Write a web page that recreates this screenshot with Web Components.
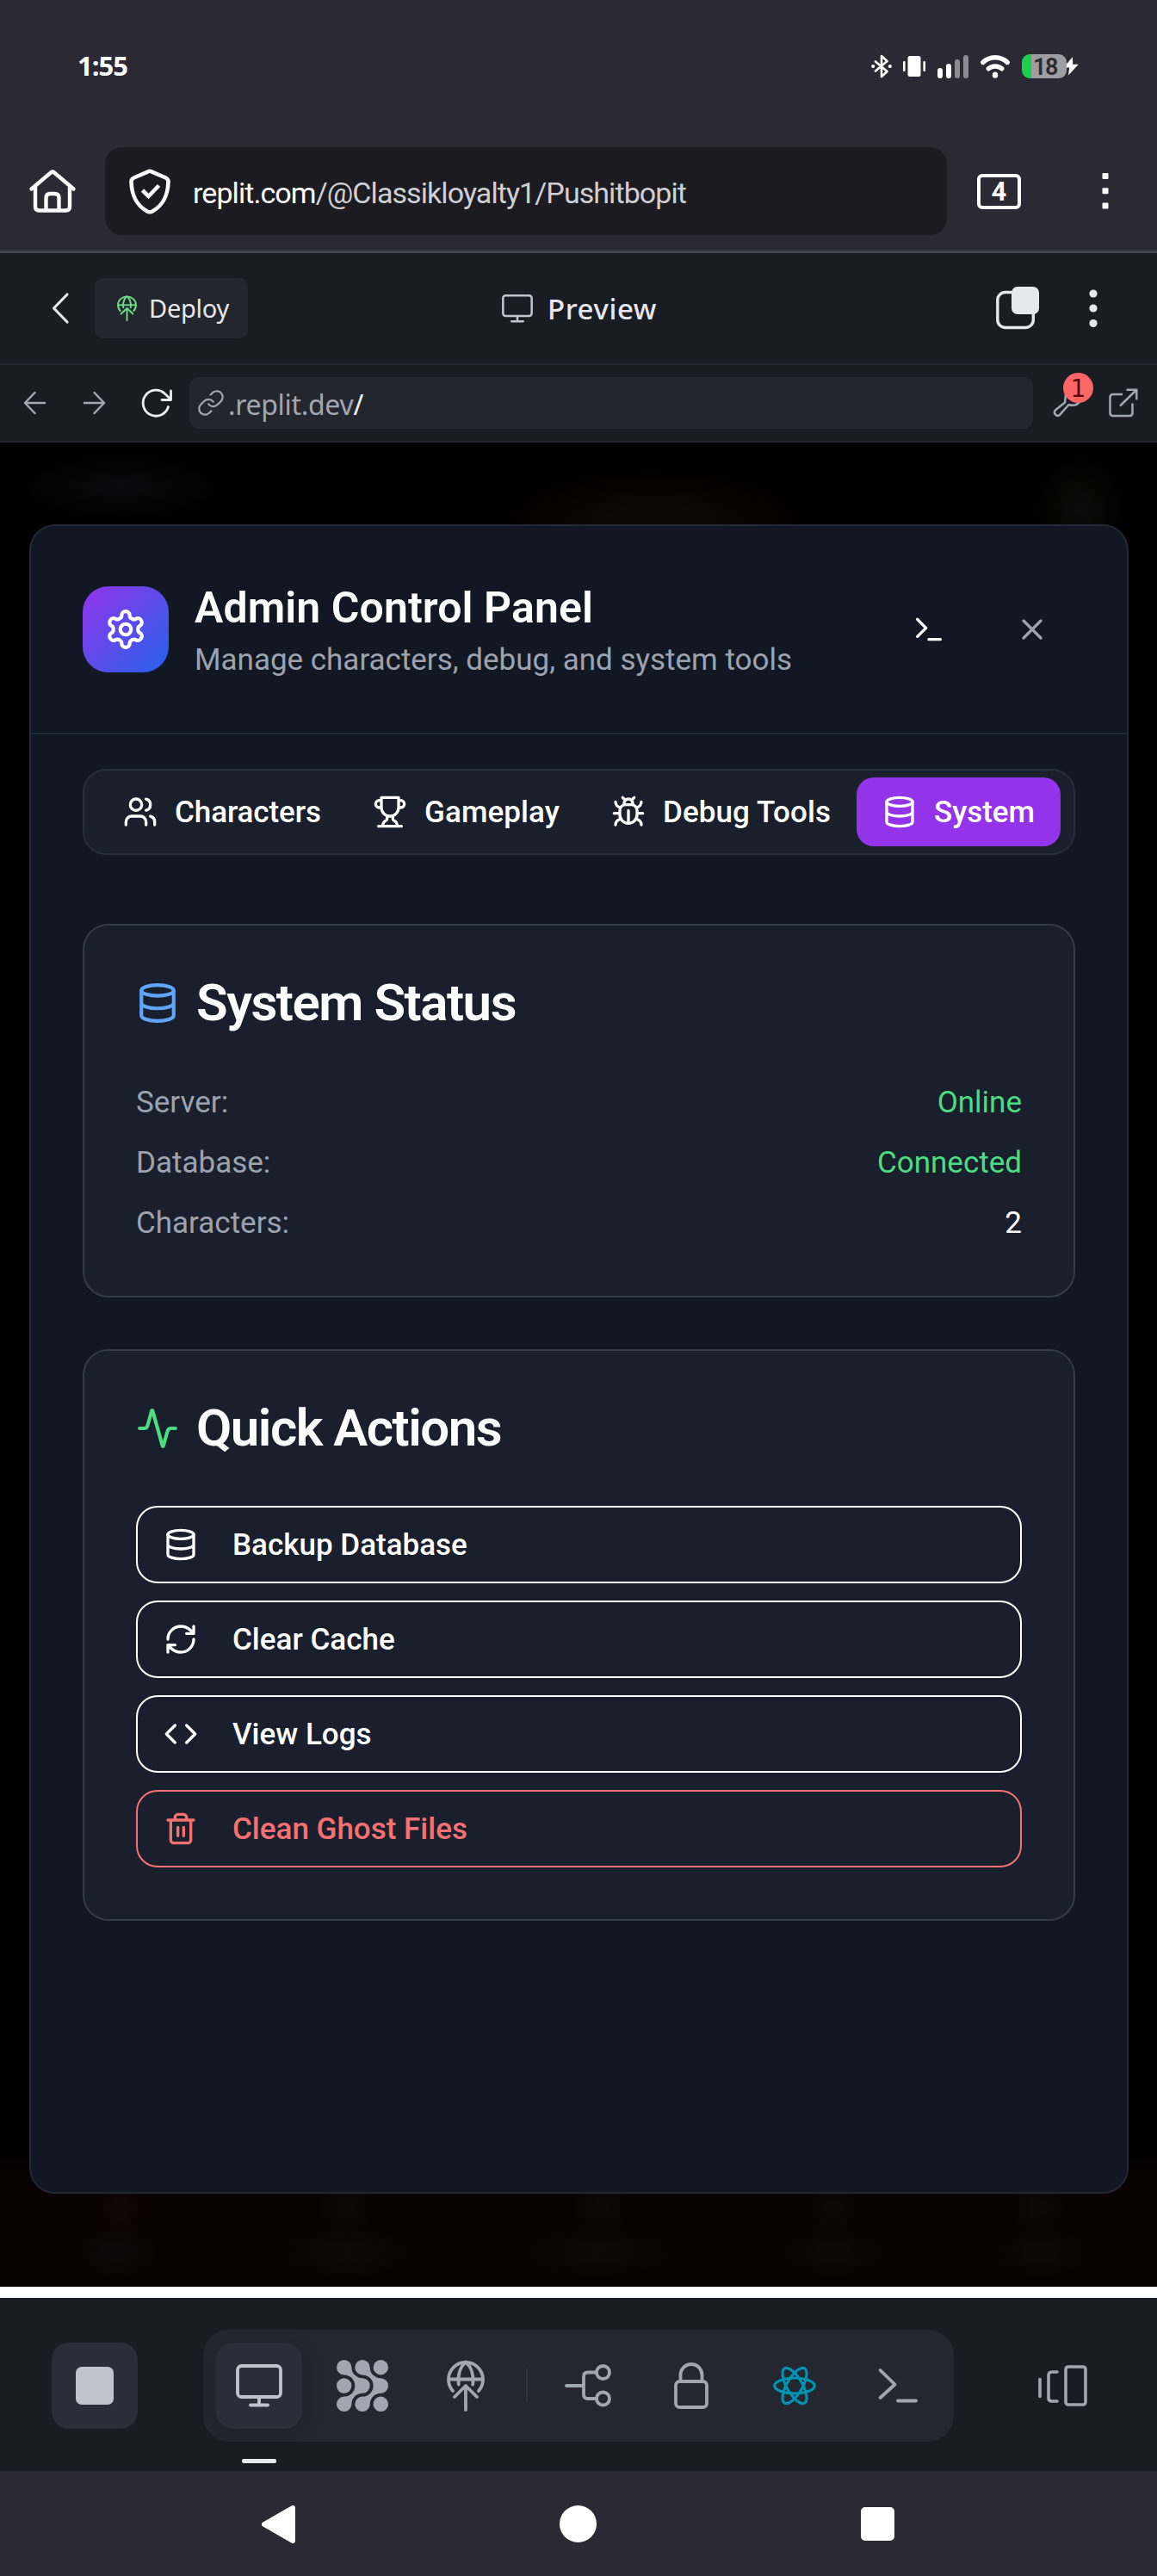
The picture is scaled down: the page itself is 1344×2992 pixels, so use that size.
<!DOCTYPE html>
<html lang="en">
<head>
<meta charset="utf-8">
<title>Replit preview</title>
<style>
html,body{margin:0;padding:0;background:#2b2933}
body{width:1344px;height:2992px;overflow:hidden;font-family:Roboto,"Noto Sans",sans-serif;color:#fff}
</style>
</head>
<body>
<phone-screen></phone-screen>
<script>
const ICONS = {
  bluetooth:[24,28,'<path d="M5 8.500 18.500 20 12 26V2l6.500 6L5 19.500" fill="none" stroke="currentColor" stroke-width="2.600" stroke-linejoin="round" stroke-linecap="round"/><circle cx="2.200" cy="14" r="2.100" fill="currentColor"/><circle cx="21.800" cy="14" r="2.100" fill="currentColor"/>'],
  vibrate:[26,24,'<g fill="currentColor"><rect x="5.500" y="0" width="15" height="24" rx="2.500"/><rect x="0" y="6" width="2.600" height="12" rx="1.200"/><rect x="23.400" y="6" width="2.600" height="12" rx="1.200"/></g>'],
  signal:[36,27,'<g fill="currentColor"><rect x="0" y="15" width="6" height="12" rx="3"/><rect x="10" y="10" width="6" height="17" rx="3"/><g opacity=".46"><rect x="20" y="5" width="6" height="22" rx="3"/><rect x="30" y="0" width="6" height="27" rx="3"/></g></g>'],
  wifi:[34,27,'<g fill="none" stroke="currentColor" stroke-width="5.400" stroke-linecap="round"><path d="M2.800 8.500C10.500.8 23.500.8 31.200 8.500"/><path d="M9.300 15.800c4.300-3.800 11.100-3.800 15.400 0"/></g><ellipse cx="17" cy="23.200" rx="3.200" ry="3.600" fill="currentColor"/>'],
  bolt:[20,24,'<path d="M12 1 1.500 13.500h6.800L7 22.500 18.800 9.800h-6.600z" fill="currentColor"/>'],
  home:[54,50,'<g fill="none" stroke="currentColor" stroke-width="4.400" stroke-linecap="round" stroke-linejoin="round"><path d="M2.500 22.500 25 3.500q2-1.700 4 0l22.500 19"/><path d="M7 19v24q0 4.500 4.500 4.500h31q4.500 0 4.500-4.500V19"/><path d="M19.500 47V33q0-5 5-5h5q5 0 5 5v14"/></g>'],
  shield:[48,53,'<path d="M22 3.300q2-1 4 0l16.500 7.200q3 1.400 3 4.500C45 31 40 42 27 49.500q-3 1.600-6 0C8 42 3 31 2.500 15q0-3.100 3-4.500z" fill="none" stroke="currentColor" stroke-width="4.600"/><path d="m15.500 25 7 7L34.500 19.500" fill="none" stroke="currentColor" stroke-width="4.600"/>'],
  squaredots:[8,42,'<g fill="currentColor"><rect y="0" x=".5" width="7" height="7" rx="1"/><rect y="17.200" x=".5" width="7" height="7" rx="1"/><rect y="34.400" x=".5" width="7" height="7" rx="1"/></g>'],
  back:[20,36,'<path d="M18 2 2.500 18 18 34" fill="none" stroke="currentColor" stroke-width="3.200" stroke-linecap="round" stroke-linejoin="round"/>'],
  globeup:[44,60,'<g fill="none" stroke="currentColor" stroke-width="3.800" stroke-linecap="round" stroke-linejoin="round"><path d="M7 36A20 20 0 1 1 37 36" /><path d="M2 22.500h40" stroke-linecap="butt"/><path d="M13.800 28.500C12.500 18 15.500 8 22 2.500c6.500 5.500 9.500 15.500 8.200 26"/><path d="M9 43 22 30 35 43M22 30v28"/></g>'],
  monitor:[54,50,'<g fill="none" stroke="currentColor" stroke-width="3.800"><rect x="2" y="2" width="50" height="36" rx="4.500"/><path d="M27 38v9"/><path d="M17 47.500h20" stroke-linecap="round"/></g>'],
  split:[50,50,'<rect x="1.800" y="6.500" width="41.500" height="41" rx="9" fill="none" stroke="currentColor" stroke-width="3.400"/><rect x="18" y="0" width="32" height="32" rx="7" fill="currentColor"/>'],
  dots:[10,46,'<g fill="currentColor"><circle cx="5" cy="6" r="4.600"/><circle cx="5" cy="23" r="4.600"/><circle cx="5" cy="40.500" r="4.600"/></g>'],
  arrowl:[26,28,'<path d="M25 14H2M13.500 2 2 14l11.500 12" fill="none" stroke="currentColor" stroke-width="2.500" stroke-linecap="round" stroke-linejoin="round"/>'],
  arrowr:[26,28,'<path d="M1 14h23M12.500 2 24 14 12.500 26" fill="none" stroke="currentColor" stroke-width="2.500" stroke-linecap="round" stroke-linejoin="round"/>'],
  reload:[36,34,'<path d="M31.500 21.500A15 15 0 1 1 28 6.800L34.500 13M34.500 3v10.500H24" fill="none" stroke="currentColor" stroke-width="2.800" stroke-linecap="round" stroke-linejoin="round"/>'],
  link:[28,28,'<g transform="translate(-2.600 -2.600) scale(1.380)" fill="none" stroke="currentColor" stroke-width="1.600" stroke-linecap="round" stroke-linejoin="round"><path d="M10 13a5 5 0 0 0 7.540.54l3-3a5 5 0 0 0-7.070-7.070l-1.720 1.710"/><path d="M14 11a5 5 0 0 0-7.540-.54l-3 3a5 5 0 0 0 7.070 7.070l1.710-1.710"/></g>'],
  wrench:[36,36,'<path d="M15 10 14 19.500 2.800 28.500a3.800 3.800 0 0 0 5 5.600L18.500 22c5 1.500 10 1 13-4l2-8" fill="none" stroke="currentColor" stroke-width="2.500" stroke-linejoin="round"/>'],
  external:[34,34,'<g fill="none" stroke="currentColor" stroke-width="2.500" stroke-linejoin="round"><path d="M16 7H5q-3.500 0-3.500 3.500v18Q1.500 32 5 32h19q3.500 0 3.500-3.500V17.500"/><path d="M13 20.500 32 2M20.500 1.800h11.800v11.500"/></g>'],
  blocks:[60,60,'<g fill="currentColor"><circle cx="8.700" cy="30" r="8.700"/><circle cx="51.300" cy="8.700" r="8.700"/><circle cx="51.300" cy="51.300" r="8.700"/><path d="M17.400 8.700A12.600 12.600 0 0 0 30 21.300A8.700 8.700 0 0 1 30 38.700A12.600 12.600 0 0 0 17.400 51.300A8.700 8.700 0 1 1 8.700 42.600A12.600 12.600 0 0 0 21.300 30A12.600 12.600 0 0 0 8.700 17.400A8.700 8.700 0 1 1 17.400 8.700Z"/><path transform="translate(21.300)" d="M17.400 8.700A12.600 12.600 0 0 0 30 21.300A8.700 8.700 0 0 1 30 38.700A12.600 12.600 0 0 0 17.400 51.300A8.700 8.700 0 1 1 8.700 42.600A12.600 12.600 0 0 0 21.300 30A12.600 12.600 0 0 0 8.700 17.400A8.700 8.700 0 1 1 17.400 8.700Z"/></g>'],
  branch:[54,50,'<g fill="none" stroke="currentColor" stroke-width="3.800" stroke-linecap="round"><circle cx="44.500" cy="9.500" r="7.500"/><circle cx="44.500" cy="40" r="7.500"/><path d="M2 25h20M37 9.500H27q-5 0-5 5v20.500q0 5 5 5h10"/></g>'],
  lock:[40,54,'<g fill="none" stroke="currentColor" stroke-width="3.800"><rect x="2" y="22" width="36" height="30" rx="4.500"/><path d="M7.500 22v-7.500a12.500 12.500 0 0 1 25 0V22"/></g>'],
  react:[50,46,'<g fill="none" stroke="currentColor" stroke-width="3.200"><ellipse cx="25" cy="23" rx="23.300" ry="9"/><ellipse cx="25" cy="23" rx="23.300" ry="9" transform="rotate(60 25 23)"/><ellipse cx="25" cy="23" rx="23.300" ry="9" transform="rotate(120 25 23)"/></g>'],
  prompt:[46,40,'<path d="m2.500 2.500 17 16.500-17 15.500M23 38h21" transform="translate(0 -.5)" fill="none" stroke="currentColor" stroke-width="3.800" stroke-linecap="round" stroke-linejoin="round"/>'],
  panes:[57,48,'<g fill="none" stroke="currentColor" stroke-width="3.600" stroke-linecap="round"><rect x="32" y="2" width="23" height="44" rx="3"/><path d="M22 8h-6q-4 0-4 4v26q0 4 4 4h6M2 16.500v20"/></g>'],
  settings:'<path d="M12.220 2h-.44a2 2 0 0 0-2 2v.18a2 2 0 0 1-1 1.730l-.43.25a2 2 0 0 1-2 0l-.15-.08a2 2 0 0 0-2.730.73l-.22.38a2 2 0 0 0 .73 2.730l.15.1a2 2 0 0 1 1 1.720v.51a2 2 0 0 1-1 1.740l-.15.09a2 2 0 0 0-.73 2.730l.22.38a2 2 0 0 0 2.730.73l.15-.08a2 2 0 0 1 2 0l.43.25a2 2 0 0 1 1 1.730V20a2 2 0 0 0 2 2h.44a2 2 0 0 0 2-2v-.18a2 2 0 0 1 1-1.730l.43-.25a2 2 0 0 1 2 0l.15.08a2 2 0 0 0 2.730-.73l.22-.39a2 2 0 0 0-.73-2.730l-.15-.08a2 2 0 0 1-1-1.740v-.5a2 2 0 0 1 1-1.740l.15-.09a2 2 0 0 0 .73-2.730l-.22-.38a2 2 0 0 0-2.730-.73l-.15.08a2 2 0 0 1-2 0l-.43-.25a2 2 0 0 1-1-1.730V4a2 2 0 0 0-2-2z"/><circle cx="12" cy="12" r="3"/>',
  terminal:'<path d="m4 17 6-6-6-6M12 19h8"/>',
  close:'<path d="M18 6 6 18M6 6l12 12"/>',
  users:'<path d="M16 21v-2a4 4 0 0 0-4-4H6a4 4 0 0 0-4 4v2"/><circle cx="9" cy="7" r="4"/><path d="M22 21v-2a4 4 0 0 0-3-3.870M16 3.130a4 4 0 0 1 0 7.750"/>',
  trophy:'<path d="M6 9H4.500a2.500 2.500 0 0 1 0-5H6M18 9h1.500a2.500 2.500 0 0 0 0-5H18M4 22h16M10 14.660V17c0 .55-.47.98-.97 1.210C7.850 18.750 7 20.240 7 22M14 14.660V17c0 .55.47.98.97 1.210C16.150 18.750 17 20.240 17 22M18 2H6v7a6 6 0 0 0 12 0V2Z"/>',
  bug:'<path d="m8 2 1.880 1.880M14.120 3.880 16 2M9 7.130v-1a3.003 3.003 0 1 1 6 0v1M12 20c-3.300 0-6-2.700-6-6v-3a4 4 0 0 1 4-4h4a4 4 0 0 1 4 4v3c0 3.300-2.700 6-6 6M12 20v-9M6.530 9C4.600 8.800 3 7.100 3 5M6 13H2M3 21c0-2.100 1.700-3.900 3.800-4M20.970 5c0 2.100-1.600 3.800-3.500 4M22 13h-4M17.200 17c2.100.1 3.800 1.900 3.800 4"/>',
  database:'<ellipse cx="12" cy="5" rx="9" ry="3"/><path d="M3 5V19A9 3 0 0 0 21 19V5M3 12A9 3 0 0 0 21 12"/>',
  activity:'<path d="M22 12h-2.480a2 2 0 0 0-1.930 1.460l-2.350 8.360a.25.25 0 0 1-.48 0L9.240 2.180a.25.25 0 0 0-.48 0l-2.350 8.360A2 2 0 0 1 4.490 12H2"/>',
  refresh:'<path d="M3 12a9 9 0 0 1 9-9 9.750 9.750 0 0 1 6.740 2.740L21 8M21 3v5h-5M21 12a9 9 0 0 1-9 9 9.750 9.750 0 0 1-6.740-2.740L3 16M8 16H3v5"/>',
  code:'<path d="m16 18 6-6-6-6M8 6l-6 6 6 6"/>',
  trash:'<path d="M3 6h18M19 6v14c0 1-1 2-2 2H7c-1 0-2-1-2-2V6M8 6V4c0-1 1-2 2-2h4c1 0 2 1 2 2v2M10 11v6M14 11v6"/>'
};

const define = (name, css, html) => customElements.define(name, class extends HTMLElement {
  constructor() {
    super();
    this.attachShadow({mode: 'open'}).innerHTML =
      '<style>:host{display:block;box-sizing:border-box}*{box-sizing:border-box}' + css + '</style>' + html;
  }
});

/* <ui-icon name width height>: own artboard, or the 24-unit outline grid. */
customElements.define('ui-icon', class extends HTMLElement {
  connectedCallback() {
    if (this.shadowRoot) return;
    const def = ICONS[this.getAttribute('name')];
    const own = Array.isArray(def);
    const w = +this.getAttribute('w') || (own ? def[0] : 40);
    const h = +this.getAttribute('h') || (own ? def[1] : w);
    const vb = own ? `0 0 ${def[0]} ${def[1]}` : '0 0 24 24';
    const attrs = own ? '' : ' fill="none" stroke="currentColor" stroke-width="2" stroke-linecap="round" stroke-linejoin="round"';
    this.attachShadow({mode: 'open'}).innerHTML =
      `<style>:host{display:block;flex:none;width:${w}px;height:${h}px}svg{display:block;width:100%;height:100%;overflow:visible}</style>` +
      `<svg viewBox="${vb}" preserveAspectRatio="none"${attrs}>${own ? def[2] : def}</svg>`;
  }
});

/* <fit-text w>: tracks its text so that the run is w pixels wide. */
customElements.define('fit-text', class extends HTMLElement {
  connectedCallback() {
    if (this.shadowRoot) return;
    this.attachShadow({mode: 'open'}).innerHTML =
      '<style>:host{display:block;flex:none;white-space:nowrap}span{display:inline-block}</style><span><slot></slot></span>';
    const s = this.shadowRoot.querySelector('span');
    const w = +this.getAttribute('w');
    s.style.letterSpacing = (w - s.getBoundingClientRect().width) / this.textContent.length + 'px';
  }
});

define('status-bar', `
  :host{display:flex;align-items:flex-start;height:171px;padding:63px 90px 0;color:#fff}
  .time{font:700 31px/26px "Open Sans",sans-serif}
  .right{margin-left:auto;display:flex;align-items:center;height:28px}
  .bat{position:relative;width:52px;height:28px;margin-left:14px;border-radius:9px;background:linear-gradient(90deg,#1bcf4b 11px,#9e9da3 11px);color:#2b2933;
    font:600 27px/30px Roboto,sans-serif;padding-left:13px;letter-spacing:-1.500px}
  .bolt{margin-left:-5px}`,
  `<fit-text class="time" w="58">1:55</fit-text>
   <div class="right"><ui-icon name="bluetooth"></ui-icon><ui-icon name="vibrate" style="margin-left:13px"></ui-icon>
   <ui-icon name="signal" style="margin-left:14px"></ui-icon><ui-icon name="wifi" style="margin-left:14px"></ui-icon>
   <div class="bat">18</div><ui-icon class="bolt" name="bolt"></ui-icon></div>`);

define('address-bar', `
  :host{display:flex;align-items:center;height:123px;padding:0 0 18px 34px;border-bottom:3px solid #42414d;color:#fbfbfe}
  .field{width:978px;height:102px;margin-left:34px;border-radius:20px;background:#1c1b22;display:flex;align-items:center;padding-left:28px}
  .url{margin:4px 0 0 26px;font-size:34px;line-height:44px;color:#cfcfd6}
  .url b{font-weight:400;color:#fbfbfe}
  .tabs{width:51px;height:41px;margin-left:35px;border:4px solid;border-radius:6px;font:700 31px/33px Roboto,sans-serif;text-align:center}
  .menu{margin-left:94px}`,
  `<ui-icon name="home"></ui-icon><div class="field"><ui-icon name="shield"></ui-icon>
   <fit-text class="url" w="573"><b>replit.com</b>/@Classikloyalty1/Pushitbopit</fit-text></div>
   <div class="tabs">4</div><ui-icon class="menu" name="squaredots"></ui-icon>`);

define('workspace-header', `
  :host{display:flex;align-items:center;height:130px;padding:0 69px 0 60px;background:#1a1c24;border-bottom:2px solid #242630;color:#e6e8ee;font-family:"Noto Sans",sans-serif}
  .deploy{display:flex;align-items:center;width:178px;height:70px;margin-left:30px;padding-left:26px;border-radius:10px;background:#24262f;font-size:29px;line-height:40px}
  .deploy ui-icon{color:#6bdc82;margin-right:14px}
  .title{display:flex;align-items:center;margin-left:295px;font-size:33px;font-weight:500;line-height:44px}
  .title fit-text{margin-top:2px}
  .title ui-icon{color:#bfc4cd;margin-right:17px}
  .acts{margin-left:auto;display:flex;align-items:center;gap:58px}`,
  `<ui-icon name="back"></ui-icon>
   <div class="deploy"><ui-icon name="globeup" w="23" h="30"></ui-icon><fit-text w="93">Deploy</fit-text></div>
   <div class="title"><ui-icon name="monitor" w="36" h="33"></ui-icon><fit-text w="127">Preview</fit-text></div>
   <div class="acts"><ui-icon name="split"></ui-icon><ui-icon name="dots"></ui-icon></div>`);

define('preview-toolbar', `
  :host{display:flex;align-items:center;height:90px;padding:0 22px 0 27px;background:#1a1c24;border-bottom:2px solid #242630;color:#a1a7b0}
  .field{flex:none;width:980px;height:60px;margin-left:20px;border-radius:10px;background:#24262f;display:flex;align-items:center;padding-left:11px;
    font:400 32px/44px "Noto Sans",sans-serif}
  .field fit-text{margin:3px 0 0 6px}
  .slash{color:#f0f1f5}
  .dev{position:relative;width:47px;height:60px;margin-left:23px;display:flex;align-items:center}
  .badge{position:absolute;left:12px;top:-5px;width:35px;height:35px;border-radius:50%;background:#ff6767;color:#5c0006;
    font:400 28px/37px "DejaVu Sans",sans-serif;text-align:center}`,
  `<ui-icon name="arrowl"></ui-icon><ui-icon name="arrowr" style="margin-left:44px"></ui-icon>
   <ui-icon name="reload" style="margin-left:41px;color:#eceef2"></ui-icon>
   <div class="field"><ui-icon name="link"></ui-icon><fit-text w="157">.replit.dev<span class="slash">/</span></fit-text></div>
   <div class="dev"><ui-icon name="wrench" style="margin-top:-4px"></ui-icon><div class="badge">1</div></div>
   <ui-icon name="external" style="margin-left:19px"></ui-icon>`);

define('admin-header', `
  :host{display:flex;align-items:center;height:242px;padding:0 60px;border-bottom:2px solid #1f2937}
  .logo{width:100px;height:100px;border-radius:30px;background:linear-gradient(135deg,#9333ea,#2563eb);display:flex;align-items:center;justify-content:center}
  .txt{margin-left:30px}
  h1{margin:0;font-size:50px;line-height:70px;font-weight:600}
  p{margin:1px 0 -1px;font-size:35px;line-height:50px;color:#9ca3af}
  .acts{margin-left:auto;display:flex;gap:20px}
  .acts div{width:100px;height:100px;display:flex;align-items:center;justify-content:center}
  .x{color:#9ca3af}`,
  `<div class="logo"><ui-icon name="settings" w="50"></ui-icon></div>
   <div class="txt"><h1><fit-text w="463">Admin Control Panel</fit-text></h1><p><fit-text w="694">Manage characters, debug, and system tools</fit-text></p></div>
   <div class="acts"><div><ui-icon name="terminal"></ui-icon></div><div class="x"><ui-icon name="close"></ui-icon></div></div>`);

customElements.define('tab-item', class extends HTMLElement {
  connectedCallback() {
    if (this.shadowRoot) return;
    this.attachShadow({mode: 'open'}).innerHTML = `<style>
      :host{display:flex;align-items:center;gap:20px;height:80px;padding:0 30px;border-radius:20px;font-size:35px;font-weight:500;line-height:50px}
      fit-text{margin-top:2px}
      :host([active]){background:#9333ea}</style>
      <ui-icon name="${this.getAttribute('icon')}"></ui-icon><fit-text w="${this.getAttribute('w')}">${this.getAttribute('label')}</fit-text>`;
  }
});

define('tab-strip', `
  :host{display:flex;align-items:center;justify-content:center;height:100px;margin:40px 60px 0;border:2px solid #26303c;border-radius:27px;background:#19202c}`,
  `<slot></slot>`);

customElements.define('panel-card', class extends HTMLElement {
  connectedCallback() {
    if (this.shadowRoot) return;
    this.attachShadow({mode: 'open'}).innerHTML = `<style>
      :host{display:block;border:2px solid #323c4b;border-radius:30px;background:#191f2c;padding:60px;margin:0 60px}
      header{display:flex;align-items:center;gap:20px;height:60px;margin-bottom:60px;font-size:60px;font-weight:600;line-height:60px}
      .body{display:flex;flex-direction:column;gap:20px}</style>
      <header><ui-icon name="${this.getAttribute('icon')}" w="50" style="color:${this.getAttribute('tint')}"></ui-icon>
      <fit-text w="${this.getAttribute('w')}">${this.getAttribute('label')}</fit-text></header>
      <div class="body"><slot></slot></div>`;
  }
});

define('status-row', `
  :host{display:flex;justify-content:space-between;height:50px;padding-top:1px;font-size:35px;line-height:50px;color:#9ca3af}
  ::slotted(.ok){color:#4ade80}::slotted(.num){color:#fff}`, `<slot name="key"></slot><slot></slot>`);

customElements.define('action-button', class extends HTMLElement {
  connectedCallback() {
    if (this.shadowRoot) return;
    this.attachShadow({mode: 'open'}).innerHTML = `<style>
      :host{box-sizing:border-box;display:flex;align-items:center;gap:40px;height:90px;padding:0 30px;border:2px solid #fff;border-radius:25px;font-size:35px;font-weight:500;line-height:50px}
      span{margin-top:2px}
      :host([danger]){color:#f87171;border-color:#f87171}</style>
      <ui-icon name="${this.getAttribute('icon')}"></ui-icon><span><slot></slot></span>`;
  }
});

define('admin-modal', `
  :host{display:flex;flex-direction:column;width:1277px;height:1939px;border:2px solid #1f2937;border-radius:30px;background:#111723}
  .cards{display:flex;flex-direction:column;gap:60px;margin-top:80px}`,
  `<admin-header></admin-header>
   <tab-strip><tab-item icon="users" label="Characters" w="170"></tab-item><tab-item icon="trophy" label="Gameplay" w="157"></tab-item>
   <tab-item icon="bug" label="Debug Tools" w="195"></tab-item><tab-item icon="database" label="System" w="117" active></tab-item></tab-strip>
   <div class="cards">
   <panel-card icon="database" tint="#60a5fa" label="System Status" w="371">
     <status-row><span slot="key">Server:</span><span class="ok">Online</span></status-row>
     <status-row><span slot="key">Database:</span><span class="ok">Connected</span></status-row>
     <status-row><span slot="key">Characters:</span><span class="num">2</span></status-row>
   </panel-card>
   <panel-card icon="activity" tint="#4ade80" label="Quick Actions" w="354">
     <action-button icon="database">Backup Database</action-button>
     <action-button icon="refresh">Clear Cache</action-button>
     <action-button icon="code">View Logs</action-button>
     <action-button icon="trash" danger>Clean Ghost Files</action-button>
   </panel-card></div>`);

define('app-stage', `
  :host{display:block;height:2142px;padding:95px 0 0 34px;background:
    radial-gradient(ellipse 115px 36px at 140px 52px,#0b0a0c,transparent),
    radial-gradient(ellipse 170px 55px at 760px 90px,#0d0801 30%,transparent),
    radial-gradient(ellipse 50px 60px at 1254px 77px,#0b0c0b,transparent),
    radial-gradient(ellipse 28px 36px at 140px 2050px,#120609,transparent),
    radial-gradient(ellipse 32px 36px at 402px 2050px,#0e0809,transparent),
    radial-gradient(ellipse 32px 36px at 698px 2050px,#0e0808,transparent),
    radial-gradient(ellipse 32px 36px at 968px 2050px,#0e0808,transparent),
    radial-gradient(ellipse 32px 36px at 1206px 2050px,#0e0808,transparent),
    radial-gradient(ellipse 48px 30px at 135px 2102px,#0f090b,transparent),
    radial-gradient(ellipse 75px 30px at 402px 2102px,#0f090a,transparent),
    radial-gradient(ellipse 85px 30px at 695px 2102px,#0f0908,transparent),
    radial-gradient(ellipse 60px 30px at 968px 2102px,#0f0908,transparent),
    radial-gradient(ellipse 55px 30px at 1208px 2102px,#0f0908,transparent),
    linear-gradient(#020101,#020101 1990px,#0b0203 2030px)}`, `<admin-modal></admin-modal>`);

define('tool-dock', `
  :host{display:flex;align-items:flex-start;height:201px;padding:37px 81px 0 60px;background:#1a1c24;color:#a1a7b0}
  .stop{width:100px;height:100px;margin-top:15px;border-radius:20px;background:#2b2d38;display:flex;align-items:center;justify-content:center}
  .stop i{width:44px;height:44px;border-radius:7px;background:#c0c4cd}
  .dock{width:872px;height:130px;margin-left:76px;border-radius:30px;background:#24272f;display:flex;align-items:center;padding-left:15px}
  .col{position:relative;flex:none;width:100px;height:100px;display:flex;align-items:center;justify-content:center;margin-right:20px}
  .on{border-radius:20px;background:#2b2d38;color:#c0c4cd;box-shadow:0 5px 20px rgba(10,12,18,.22)}
  .on::after{content:"";position:absolute;left:30px;top:135px;width:40px;height:5px;border-radius:2px;background:#e6e8ee}
  .sep{flex:none;width:2px;height:40px;margin:0 20px 0 0;background:#2f323d}
  .panes{margin:41px 0 0 auto}`,
  `<div class="stop"><i></i></div>
   <div class="dock"><div class="col on"><ui-icon name="monitor"></ui-icon></div><div class="col"><ui-icon name="blocks"></ui-icon></div>
   <div class="col"><ui-icon name="globeup"></ui-icon></div><div class="sep"></div><div class="col"><ui-icon name="branch"></ui-icon></div>
   <div class="col"><ui-icon name="lock"></ui-icon></div><div class="col" style="color:#0093b2"><ui-icon name="react"></ui-icon></div>
   <div class="col"><ui-icon name="prompt"></ui-icon></div></div>
   <ui-icon class="panes" name="panes"></ui-icon>`);

define('system-nav', `
  :host{display:flex;align-items:center;height:122px;padding:1px 305px 0 304px;justify-content:space-between;background:#2b2933}
  svg{display:block}`,
  `<svg width="39" height="44"><path d="M36 3 3 22l33 19z" fill="#fff" stroke="#fff" stroke-width="6" stroke-linejoin="round"/></svg>
   <svg width="43" height="43"><circle cx="21.500" cy="21.500" r="21.500" fill="#fff"/></svg>
   <svg width="39" height="39"><rect width="39" height="39" rx="5" fill="#fff"/></svg>`);

define('phone-screen', `
  :host{display:flex;flex-direction:column;width:1344px;height:2992px}
  .strip{height:13px;background:#fff}`,
  `<status-bar></status-bar><address-bar></address-bar><workspace-header></workspace-header><preview-toolbar></preview-toolbar>
   <app-stage></app-stage><div class="strip"></div><tool-dock></tool-dock><system-nav></system-nav>`);
</script>
</body>
</html>
